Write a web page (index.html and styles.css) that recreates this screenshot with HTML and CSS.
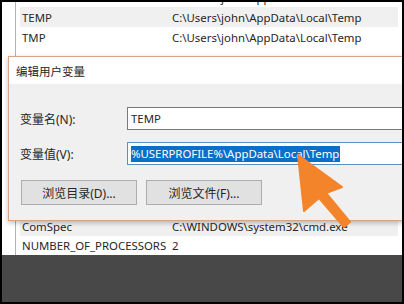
FILE: index.html
```html
<!DOCTYPE html>
<html lang="zh-CN">
<head>
  <meta charset="UTF-8" />
  <title>编辑用户变量</title>
  <link rel="stylesheet" href="styles.css">
</head>
<body>
  <div class="screen">
    <div class="list list-top">
      <div class="rows">
        <div class="row"><span class="name">Path</span><span class="val">C:\Users\john\AppData\Local\Microsoft\WindowsApps;</span></div>
        <div class="row alt"><span class="name">TEMP</span><span class="val">C:\Users\john\AppData\Local\Temp</span></div>
        <div class="row"><span class="name">TMP</span><span class="val">C:\Users\john\AppData\Local\Temp</span></div>
      </div>
    </div>

    <div class="dialog">
      <div class="title">编辑用户变量</div>
      <div class="body">
        <div class="field">
          <label>变量名(N):</label>
          <div class="input">TEMP</div>
        </div>
        <div class="field">
          <label>变量值(V):</label>
          <div class="input focused"><span class="sel">%USERPROFILE%\AppData\Local\Temp</span></div>
        </div>
        <div class="buttons">
          <button>浏览目录(D)...</button>
          <button>浏览文件(F)...</button>
        </div>
      </div>
    </div>

    <div class="list list-bottom">
      <div class="rows">
        <div class="row alt"><span class="name">ComSpec</span><span class="val">C:\WINDOWS\system32\cmd.exe</span></div>
        <div class="row"><span class="name">NUMBER_OF_PROCESSORS</span><span class="val">2</span></div>
      </div>
    </div>

    <div class="letterbox"></div>

    <svg class="arrow" width="70" height="80" viewBox="0 0 70 80">
      <polygon points="3,1 47,33 31,39 55,68 49,73 24,44 9,57" fill="#f4842a" stroke="#f4842a" stroke-width="2" stroke-linejoin="round"/>
    </svg>
  </div>
</body>
</html>
```

FILE: styles.css
```css
* {
  box-sizing: border-box;
}
body {
  margin: 0;
  background: #000;
  font-family: 'Noto Sans', 'Noto Sans CJK SC', sans-serif;
  font-size: 12px;
  color: #262626;
}
.screen {
  position: relative;
  margin: 2px;
  width: 400px;
  height: 300px;
  background: #fff;
  display: flex;
  flex-direction: column;
  overflow: hidden;
}
.list {
  flex: none;
  margin-left: 13px;
  border-left: 1px solid #b4b4b4;
  overflow: hidden;
}
.list-top {
  height: 54px;
}
.list-top .rows {
  margin-top: -15px;
}
.list-top .row {
  height: 20px;
}
.list-bottom {
  height: 34px;
}
.list-bottom .rows {
  margin-top: -4px;
}
.list-bottom .row {
  height: 19px;
}
.row {
  display: flex;
  align-items: center;
  margin: 0 4px 0 4px;
  padding-left: 2px;
  font-size: 11.4px;
  white-space: nowrap;
}
.row.alt {
  background: #f0f0f0;
}
.name {
  width: 150px;
  flex: none;
}
.dialog {
  position: relative;
  z-index: 1;
  flex: none;
  margin-left: 6px;
  width: 420px;
  border: 1px solid #d9a386;
  box-shadow: 0 2px 5px rgba(0, 0, 0, 0.25);
}
.title {
  height: 27px;
  background: #fff;
  padding-left: 7px;
  font-size: 11.5px;
  display: flex;
  align-items: center;
}
.body {
  height: 136px;
  background: #f0f0f0;
  padding: 23px 0 0 11px;
}
.field {
  display: flex;
  align-items: center;
  margin-bottom: 12px;
}
.field label {
  width: 107px;
  flex: none;
}
.input {
  flex: 1;
  height: 23px;
  background: #fff;
  border: 1px solid #7a7a7a;
  padding-left: 3px;
  font-size: 11.4px;
  display: flex;
  align-items: center;
}
.input.focused {
  border-color: #5a8fc8;
}
.sel {
  background: #0a6fc9;
  color: #fff;
  padding: 1px 1px 1px 0;
  line-height: 14px;
}
.buttons {
  display: flex;
  gap: 9px;
  padding-top: 3px;
  padding-left: 1px;
}
button {
  width: 116px;
  height: 25px;
  background: #e1e1e1;
  border: 1px solid #adadad;
  font-family: inherit;
  font-size: 12px;
  color: #262626;
}
.letterbox {
  flex: 1;
  background: #484848;
}
.arrow {
  position: absolute;
  z-index: 2;
  left: 293px;
  top: 152px;
}
```
